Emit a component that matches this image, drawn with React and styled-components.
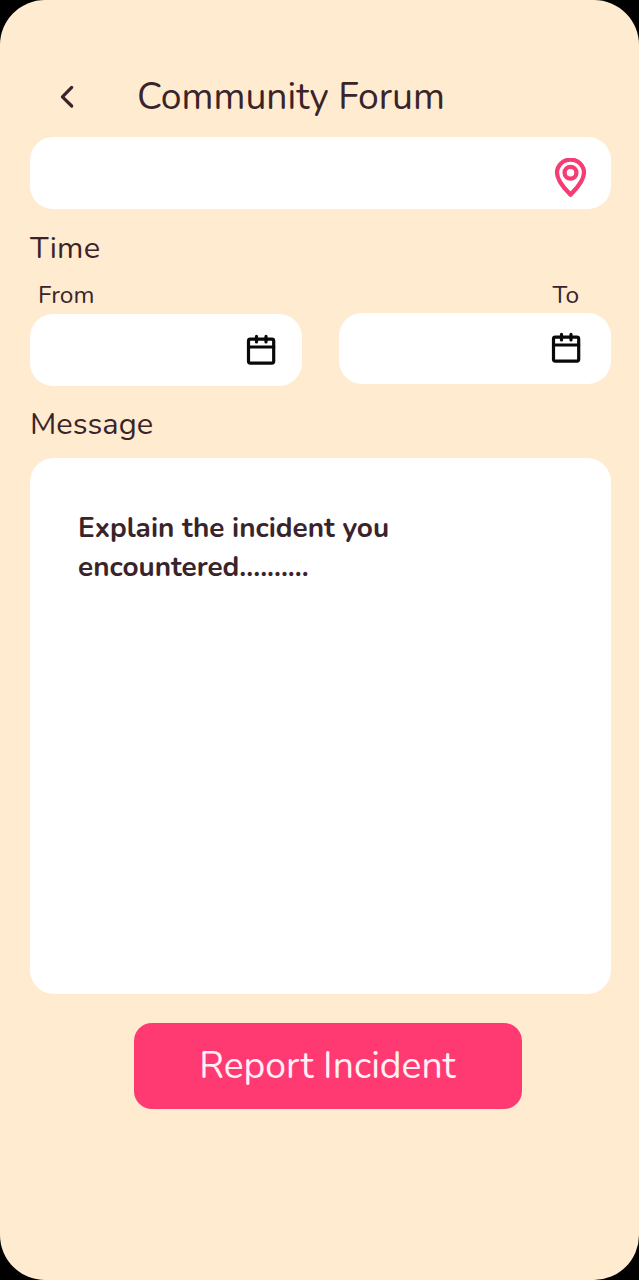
import React from "react";
import styled, { createGlobalStyle } from "styled-components";

const GlobalStyle = createGlobalStyle`
  * { box-sizing: border-box; }
  body { margin: 0; background: #000; }
`;

const Screen = styled.main`
  display: flex;
  flex-direction: column;
  width: 639px;
  height: 1280px;
  padding: 76px 28px 0 30px;
  border-radius: 45px;
  background: #ffebd0;
  color: #3a242a;
  font-family: Nunito, Lato, sans-serif;
`;

const Header = styled.header`
  display: flex;
  align-items: center;
  height: 42px;
  margin-bottom: 19px;
  padding-left: 30px;
`;

const BackButton = styled.button`
  display: flex;
  width: 14px;
  height: 24px;
  margin-right: 63px;
  padding: 0;
  border: 0;
  background: none;
  color: inherit;
`;

const Title = styled.h1`
  margin: 0;
  font-size: 37.3px;
  font-weight: 400;
  line-height: 42px;
  white-space: nowrap;
`;

const Field = styled.div`
  display: flex;
  align-items: center;
  justify-content: flex-end;
  width: 100%;
  height: 71.5px;
  padding-right: ${({ $inset }) => $inset}px;
  padding-top: ${({ $drop = 0 }) => $drop}px;
  border-radius: 23px;
  background: #fff;
`;

const SectionLabel = styled.h2`
  margin: ${({ $top }) => $top}px 0 0;
  font-size: 30.8px;
  font-weight: 400;
  line-height: 40px;
  letter-spacing: ${({ $tracking = 0 }) => $tracking}px;
`;

const DateRow = styled.div`
  display: flex;
  gap: 37px;
  height: 107px;
  margin-top: 10.8px;
`;

const DateGroup = styled.div`
  display: flex;
  flex-direction: column;
  width: 272px;
`;

const DateLabel = styled.label`
  display: flex;
  justify-content: ${({ $end }) => ($end ? "flex-end" : "flex-start")};
  height: ${({ $end }) => ($end ? 33.7 : 35.5)}px;
  padding: 0 32px 0 8px;
  font-size: 24.5px;
  line-height: 32px;
`;

const Message = styled.section`
  height: 536.2px;
  margin-top: 13.6px;
  padding: 51px 48px;
  border-radius: 24px;
  background: #fff;
`;

const Prompt = styled.p`
  width: 340px;
  margin: 0;
  font-size: 27.95px;
  font-weight: 700;
  line-height: 39px;
`;

const ReportButton = styled.button`
  width: 388.4px;
  height: 85.5px;
  margin: 29.5px 0 0 104px;
  padding: 0 1.5px 1px 0;
  border: 0;
  border-radius: 18px;
  background: #ff3972;
  color: #fff0f4;
  font-family: inherit;
  font-size: 37.3px;
  line-height: 84px;
`;

const Icon = styled.svg`
  display: block;
  flex: none;
  fill: none;
  stroke: currentColor;
  stroke-linecap: round;
  stroke-linejoin: round;
`;

const PinIcon = styled(Icon)`
  color: #f53d74;
`;

const CalendarIcon = () => (
  <Icon width="30" height="32" viewBox="0 0 30 32" strokeWidth="3.2" color="#0b0809">
    <rect x="2.5" y="5.1" width="25.2" height="24" rx="1.8" />
    <path d="M2.5 13h25.2M10.5 2.4v5.6M20 2.4v5.6" />
  </Icon>
);

export default function App() {
  return (
    <>
      <GlobalStyle />
      <Screen>
        <Header>
          <BackButton aria-label="Back">
            <Icon width="14" height="24" viewBox="0 0 14 24" strokeWidth="3.2">
              <path d="M11.7 2.4 2.4 11.8l9.3 9.2" />
            </Icon>
          </BackButton>
          <Title>Community Forum</Title>
        </Header>
        <Field $inset={24} $drop={10.5}>
          <PinIcon width="33" height="40" viewBox="0 0 33 40" strokeWidth="4.3">
            <path d="M16.5 36.7C12.5 32.5 3 23.5 3 14.7a13.5 13.1 0 0 1 27 0C30 23.5 20.5 32.5 16.5 36.7Z" />
            <circle cx="16.5" cy="14.8" r="5.9" />
          </PinIcon>
        </Field>
        <SectionLabel $top={19.6} $tracking={0.3}>Time</SectionLabel>
        <DateRow>
          <DateGroup>
            <DateLabel>From</DateLabel>
            <Field $inset={26}><CalendarIcon /></Field>
          </DateGroup>
          <DateGroup>
            <DateLabel $end>To</DateLabel>
            <Field $inset={30}><CalendarIcon /></Field>
          </DateGroup>
        </DateRow>
        <SectionLabel $top={18.2}>Message</SectionLabel>
        <Message>
          <Prompt>Explain the incident you encountered..........</Prompt>
        </Message>
        <ReportButton>Report Incident</ReportButton>
      </Screen>
    </>
  );
}
